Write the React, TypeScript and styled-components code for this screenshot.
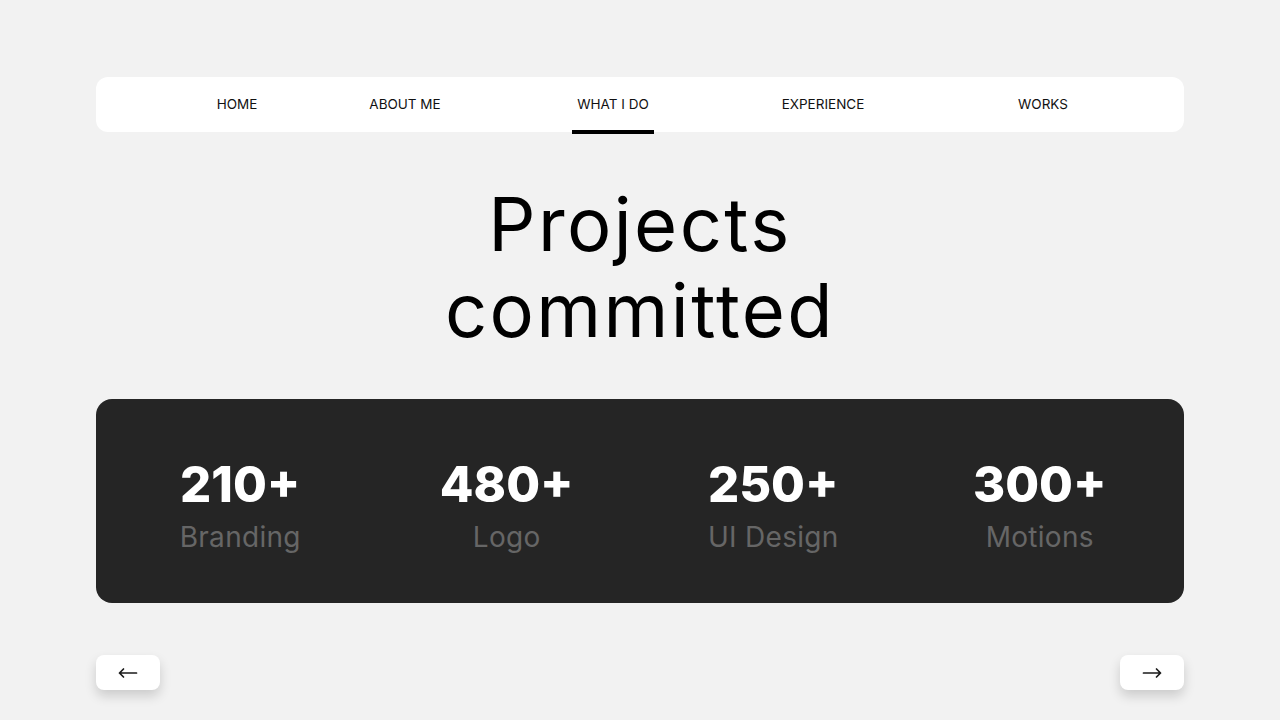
import styled, { createGlobalStyle } from "styled-components";

const GlobalStyle = createGlobalStyle`
  html, body {
    margin: 0;
    padding: 0;
    background: #f2f2f2;
  }

  body {
    font-family: Inter, "Noto Sans", sans-serif;
    color: #000;
  }
`;

const Page = styled.div`
  width: 1088px;
  margin: 0 auto;
  padding-top: 77px;
  padding-bottom: 30px;
  display: flex;
  flex-direction: column;
`;

const Nav = styled.nav`
  height: 55px;
  background: #fff;
  border-radius: 12px;
  display: grid;
  grid-template-columns: 170px 166px 250px 170px 270px;
  padding-left: 56px;
`;

const NavItem = styled.a<{ $active?: boolean }>`
  justify-self: center;
  display: flex;
  align-items: center;
  padding: 0 5px;
  font-size: 13.5px;
  color: #111;
  text-decoration: none;
  text-transform: uppercase;
  border-bottom: 4px solid ${(p) => (p.$active ? "#000" : "transparent")};
  margin-bottom: -2px;
`;

const Heading = styled.h1`
  margin: 49px 0 0;
  font-size: 74px;
  font-weight: 400;
  line-height: 86px;
  text-align: center;
  letter-spacing: 2.4px;
`;

const StatsCard = styled.section`
  margin-top: 46px;
  height: 204px;
  box-sizing: border-box;
  background: #252525;
  border-radius: 16px;
  display: grid;
  grid-template-columns: repeat(4, 1fr);
  align-items: center;
  padding: 9px 11px 0;
`;

const Stat = styled.div`
  display: flex;
  flex-direction: column;
  align-items: center;
  gap: 5px;
`;

const StatValue = styled.div`
  font-size: 49px;
  font-weight: 800;
  color: #fff;
  line-height: 58px;
`;

const StatLabel = styled.div`
  font-size: 28px;
  font-weight: 400;
  color: #666;
  line-height: 36px;
  letter-spacing: 0.3px;
`;

const Controls = styled.div`
  margin-top: 52px;
  display: flex;
  justify-content: space-between;
`;

const ArrowButton = styled.button`
  width: 64px;
  height: 35px;
  border: none;
  border-radius: 8px;
  background: #fff;
  box-shadow: 0 6px 12px rgba(0, 0, 0, 0.16);
  display: flex;
  align-items: center;
  justify-content: center;
  padding: 0;
  cursor: pointer;
`;

const Arrow = ({ dir }: { dir: "left" | "right" }) => (
  <svg
    width="20"
    height="12"
    viewBox="0 0 20 12"
    fill="none"
    stroke="#1a1a1a"
    strokeWidth="1.7"
    strokeLinecap="round"
    strokeLinejoin="round"
    style={{ transform: dir === "right" ? "scaleX(-1)" : undefined }}
  >
    <path d="M1.5 6H18.5M5.5 2L1.5 6L5.5 10" />
  </svg>
);

const links = ["Home", "About me", "What I do", "Experience", "Works"];

const stats = [
  { value: "210+", label: "Branding" },
  { value: "480+", label: "Logo" },
  { value: "250+", label: "UI Design" },
  { value: "300+", label: "Motions" },
];

const App = () => {
  return (
    <>
      <GlobalStyle />
      <Page>
        <Nav>
          {links.map((l) => (
            <NavItem key={l} href="#" $active={l === "What I do"}>
              {l}
            </NavItem>
          ))}
        </Nav>
        <Heading>
          Projects
          <br />
          committed
        </Heading>
        <StatsCard>
          {stats.map((s) => (
            <Stat key={s.label}>
              <StatValue>{s.value}</StatValue>
              <StatLabel>{s.label}</StatLabel>
            </Stat>
          ))}
        </StatsCard>
        <Controls>
          <ArrowButton aria-label="Previous">
            <Arrow dir="left" />
          </ArrowButton>
          <ArrowButton aria-label="Next">
            <Arrow dir="right" />
          </ArrowButton>
        </Controls>
      </Page>
    </>
  );
};

export default App;
